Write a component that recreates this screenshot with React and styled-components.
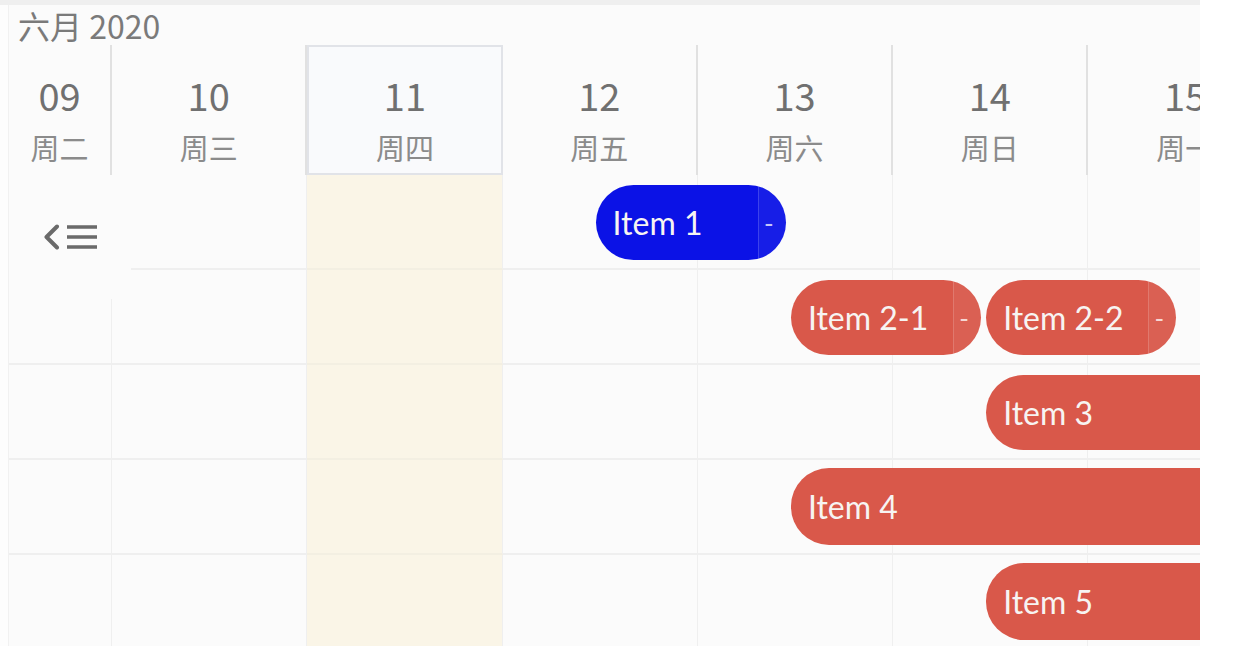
import React from "react";
import styled, { createGlobalStyle } from "styled-components";

const Global = createGlobalStyle`
  html, body { margin: 0; padding: 0; background: #ffffff; }
  #root { width: 1238px; height: 646px; overflow: hidden; }
`;

const DAY_W = 195.3;
const FIRST_W = 103;

const Page = styled.div`
  width: 1238px;
  height: 646px;
  background: #ffffff;
  display: flex;
`;

const Scheduler = styled.div`
  width: 1200px;
  height: 646px;
  box-sizing: border-box;
  border-top: 5px solid #efefef;
  padding-left: 8px;
  background: #fdfdfd;
  overflow: hidden;
  display: flex;
  flex-direction: column;
  font-family: "Noto Sans CJK SC", "Noto Sans", sans-serif;
`;

const Panel = styled.div`
  flex: 1;
  background: #fbfbfb;
  border-left: 1px solid #f1f1f1;
  display: flex;
  flex-direction: column;
  min-width: 0;
  overflow: hidden;
`;

const Title = styled.div`
  flex-shrink: 0;
  height: 40px;
  line-height: 40px;
  padding-left: 9px;
  font-size: 32px;
  color: #7a7a7a;
  white-space: nowrap;
`;

const Columns = styled.div`
  display: grid;
  grid-template-columns: ${FIRST_W}px repeat(6, ${DAY_W}px);
  width: max-content;
  flex-shrink: 0;
`;

const HeaderRow = styled(Columns)`
  height: 130px;
`;

const HeaderCell = styled.div`
  box-sizing: border-box;
  display: flex;
  flex-direction: column;
  align-items: center;
  padding-top: 28px;
  border-right: 2px solid #e1e1e1;
  ${(p) =>
    p.$today &&
    `
    border: 2px solid #e1e3e8;
    background: #f9fafc;
    padding-top: 26px;
  `}
`;

const DayNum = styled.div`
  font-size: 38px;
  line-height: 44px;
  color: #707070;
`;

const WeekDay = styled.div`
  margin-top: 12px;
  font-size: 29px;
  line-height: 36px;
  color: #8b8b8b;
`;

const Body = styled.div`
  position: relative;
  flex: 1;
`;

const Row = styled(Columns)`
  position: relative;
  height: 95px;
`;

const Cell = styled.div`
  box-sizing: border-box;
  border-right: 1px solid #efefef;
  border-bottom: 2px solid #efefef;
  background: ${(p) => (p.$today ? "#faf5e7" : "transparent")};
  ${(p) => p.$today && "border-bottom-color: #f3efe2;"}
`;

const Item = styled.div`
  position: absolute;
  top: 10px;
  height: 75px;
  box-sizing: border-box;
  border-radius: ${(p) => (p.$open ? "38px 0 0 38px" : "38px")};
  background: ${(p) => p.$color};
  display: flex;
  align-items: center;
  padding-left: 17px;
  color: #f7f4f2;
  font-family: Lato, "Open Sans", sans-serif;
  font-size: 32px;
  white-space: nowrap;
  overflow: hidden;
`;

const ItemLabel = styled.span`
  flex: 1;
`;

const Handle = styled.span`
  align-self: stretch;
  width: 28px;
  display: flex;
  align-items: center;
  padding-left: 5px;
  box-sizing: border-box;
  border-left: 1px solid rgba(255, 255, 255, 0.16);
  background: rgba(255, 255, 255, 0.05);
  font-size: 26px;
  color: rgba(255, 255, 255, 0.75);
`;

const Toggle = styled.button`
  position: absolute;
  left: 0;
  top: 0;
  width: 122px;
  height: 124px;
  border: none;
  padding: 0;
  background: #fbfbfb;
  display: flex;
  align-items: center;
  justify-content: center;
  z-index: 2;
  cursor: pointer;
`;

const days = [
  { num: "09", wd: "周二" },
  { num: "10", wd: "周三" },
  { num: "11", wd: "周四", today: true },
  { num: "12", wd: "周五" },
  { num: "13", wd: "周六" },
  { num: "14", wd: "周日" },
  { num: "15", wd: "周一" },
];

const RED = "#d9584a";
const BLUE = "#0b12e6";

// day = index in `days`
const rows = [
  [{ label: "Item 1", day: 3, span: 1, color: BLUE, handle: true }],
  [
    { label: "Item 2-1", day: 4, span: 1, color: RED, handle: true },
    { label: "Item 2-2", day: 5, span: 1, color: RED, handle: true },
  ],
  [{ label: "Item 3", day: 5, span: 3, color: RED, open: true }],
  [{ label: "Item 4", day: 4, span: 4, color: RED, open: true, top: 8, h: 77 }],
  [{ label: "Item 5", day: 5, span: 3, color: RED, open: true, top: 8, h: 77 }],
];

const ToggleIcon = () => (
  <svg width="56" height="26" viewBox="0 0 56 26" fill="none">
    <path d="M15 2.5 L4.5 13 L15 23.5" stroke="#6a6a6a" strokeWidth="4" strokeLinecap="round" strokeLinejoin="round" />
    <path d="M25 3 H55 M25 13 H55 M25 23 H55" stroke="#6a6a6a" strokeWidth="3.5" />
  </svg>
);

export default function App() {
  return (
    <Page>
      <Global />
      <Scheduler>
        <Panel>
          <Title>六月 2020</Title>
          <HeaderRow>
            {days.map((d) => (
              <HeaderCell key={d.num} $today={d.today}>
                <DayNum>{d.num}</DayNum>
                <WeekDay>{d.wd}</WeekDay>
              </HeaderCell>
            ))}
          </HeaderRow>
          <Body>
            <Toggle aria-label="toggle">
              <ToggleIcon />
            </Toggle>
            {rows.map((items, ri) => (
              <Row key={ri}>
                {days.map((d) => (
                  <Cell key={d.num} $today={d.today} />
                ))}
                {items.map((it) => (
                  <Item
                    key={it.label}
                    $color={it.color}
                    $open={it.open}
                    style={{
                      left: FIRST_W + (it.day - 1) * DAY_W + 93,
                      width: it.span * DAY_W - 5,
                      top: it.top ?? 10,
                      height: it.h ?? 75,
                    }}
                  >
                    <ItemLabel>{it.label}</ItemLabel>
                    {it.handle && <Handle>-</Handle>}
                  </Item>
                ))}
              </Row>
            ))}
          </Body>
        </Panel>
      </Scheduler>
    </Page>
  );
}
